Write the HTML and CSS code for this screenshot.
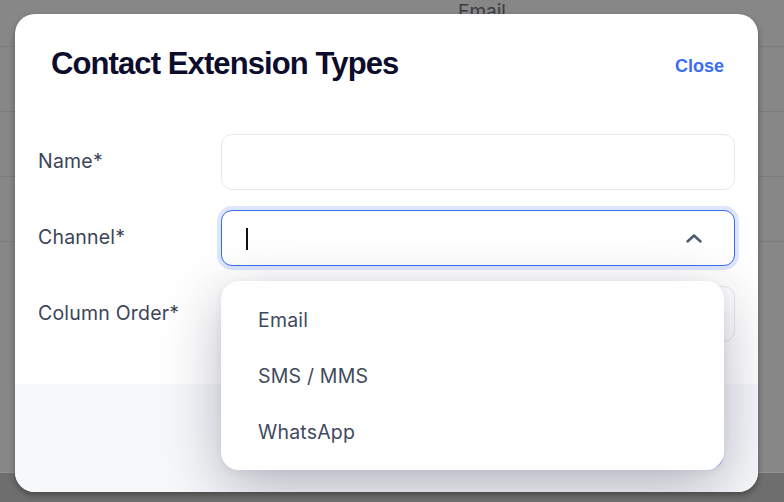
FILE: index.html
```html
<!DOCTYPE html>
<html lang="en">
<head>
<meta charset="utf-8">
<title>Contact Extension Types</title>
<link rel="stylesheet" href="styles.css">
</head>
<body>
<div class="page">
  <div class="page-row page-row-first"><span class="page-cell">Email</span></div>
  <div class="page-row"></div>
  <div class="page-row"></div>
  <div class="page-row"></div>
  <div class="page-rest"></div>
  <div class="page-foot"></div>
</div>

<div class="modal">
  <div class="modal-header">
    <h1 class="modal-title">Contact Extension Types</h1>
    <a class="modal-close" href="#">Close</a>
  </div>
  <div class="modal-body">
    <div class="field">
      <label class="field-label">Name*</label>
      <div class="input"></div>
    </div>
    <div class="field">
      <label class="field-label">Channel*</label>
      <div class="select-wrap">
        <div class="input input-focus">
          <span class="caret"></span>
          <svg class="chevron" width="18" height="10" viewBox="0 0 18 10"><path d="M2.5 8.5 L9 2.5 L15.5 8.5" fill="none" stroke="#4b5a6f" stroke-width="2.4" stroke-linecap="round" stroke-linejoin="round"/></svg>
        </div>
        <ul class="menu">
          <li class="menu-item">Email</li>
          <li class="menu-item">SMS / MMS</li>
          <li class="menu-item">WhatsApp</li>
        </ul>
      </div>
    </div>
    <div class="field">
      <label class="field-label">Column Order*</label>
      <div class="input"></div>
    </div>
  </div>
  <div class="modal-footer">
    <button class="btn-primary">Save</button>
  </div>
</div>
</body>
</html>
```
FILE: styles.css
```css
* { box-sizing: border-box; }
html, body { margin: 0; padding: 0; }
body {
  width: 784px;
  height: 502px;
  overflow: hidden;
  background: #878787;
  font-family: Inter, "Liberation Sans", sans-serif;
  position: relative;
}

.page { display: flex; flex-direction: column; height: 502px; }
.page-row {
  height: 65px;
  border-bottom: 1px solid #7a7c80;
  flex: none;
}
.page-row-first { height: 47px; position: relative; }
.page-cell {
  position: absolute;
  left: 458px;
  top: 0px;
  font-size: 19px;
  color: #3b3d44;
}
.page-rest { flex: 1; border-bottom: 1px solid #939393; }
.page-foot { height: 29px; background: #6e6e6f; flex: none; }

.modal {
  position: absolute;
  left: 15px;
  top: 14px;
  width: 743px;
  height: 478px;
  background: #ffffff;
  border-radius: 20px;
  box-shadow: 0 3px 6px rgba(0,0,0,0.35);
  display: flex;
  flex-direction: column;
  overflow: hidden;
}

.modal-header {
  display: flex;
  align-items: center;
  justify-content: space-between;
  height: 100px;
  padding: 0 34px 0 36px;
  flex: none;
}
.modal-title {
  margin: 0;
  font-family: "Liberation Sans", Arial, sans-serif;
  font-weight: 700;
  font-size: 31px;
  letter-spacing: -0.9px;
  color: #0c0c2c;
}
.modal-close {
  font-family: "Liberation Sans", Arial, sans-serif;
  font-weight: 700;
  font-size: 18px;
  color: #3b6cf6;
  text-decoration: none;
  margin-top: 4px;
}

.modal-body {
  display: flex;
  flex-direction: column;
  gap: 20px;
  padding: 20px 23px 42px 23px;
  flex: none;
}
.field {
  display: grid;
  grid-template-columns: 183px 1fr;
  align-items: center;
}
.field-label {
  font-size: 19.5px;
  color: #3c4558;
  letter-spacing: 0.2px;
  margin-top: -2px;
}
.input {
  height: 56px;
  border: 1px solid #e4e8ef;
  border-radius: 11px;
  background: #fff;
  position: relative;
  display: flex;
  align-items: center;
  padding: 0 31px 0 24px;
}
.input-focus {
  border: 1.5px solid #3a6cf4;
  box-shadow: 0 0 0 4px #dde6fd;
  justify-content: space-between;
}
.caret {
  width: 2px;
  height: 22px;
  background: #111;
  margin-top: 2px;
}
.chevron { margin-top: -1px; }

.select-wrap { position: relative; }
.menu {
  position: absolute;
  left: 0;
  top: 71px;
  width: 503px;
  margin: 0;
  padding: 12px 0 9px 0;
  list-style: none;
  background: #fff;
  border-radius: 18px;
  box-shadow: 0 18px 60px rgba(25, 30, 60, 0.30), 0 2px 8px rgba(25,30,60,0.06);
  z-index: 5;
}
.menu-item {
  height: 56px;
  display: flex;
  align-items: center;
  padding-left: 37px;
  font-size: 19.5px;
  letter-spacing: 0.2px;
  color: #3f4a5e;
  padding-bottom: 2px;
}

.modal-footer {
  flex: 1;
  background: #f7f8fa;
  display: flex;
  justify-content: flex-end;
  align-items: flex-end;
  padding: 0 35px 24px 0;
}
.btn-primary {
  height: 48px;
  width: 120px;
  border: none;
  border-radius: 12px;
  background: #3a6cf4;
  color: #fff;
  font-family: Inter, sans-serif;
  font-size: 17px;
}
```
